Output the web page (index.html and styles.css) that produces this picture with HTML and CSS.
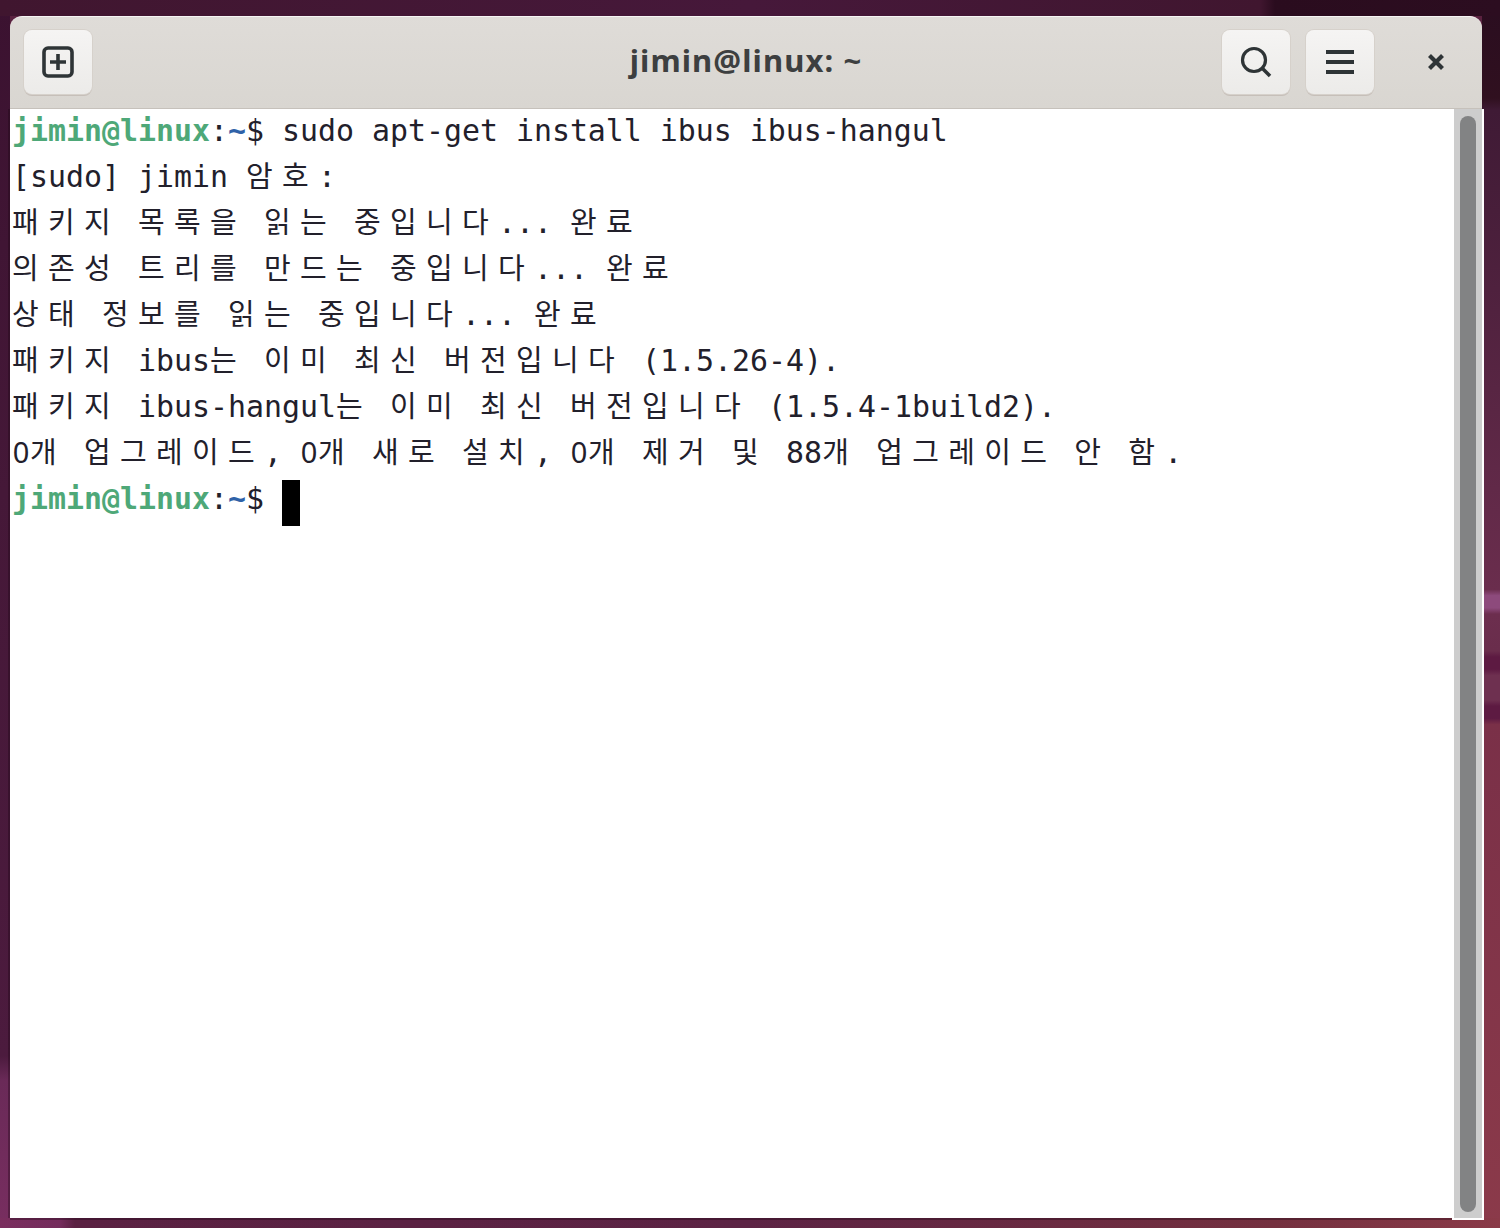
FILE: index.html
```html
<!DOCTYPE html>
<html lang="ko">
<head>
<meta charset="utf-8">
<title>jimin@linux: ~</title>
<link rel="stylesheet" href="styles.css">
</head>
<body>
<div class="window">
  <header class="titlebar">
    <div class="side side-start">
      <button class="btn" aria-label="New tab">
        <svg width="32" height="32" viewBox="0 0 32 32" fill="none" stroke="#2e3436"><rect x="2" y="2" width="28" height="28" rx="4" stroke-width="3.600"/><path d="M16 8v16M8 16h16" stroke-width="3.600"/></svg>
      </button>
    </div>
    <div class="title">jimin@linux: ~</div>
    <div class="side side-end">
      <button class="btn" aria-label="Search">
        <svg width="32" height="32" viewBox="0 0 32 32" fill="none" stroke="#2e3436"><circle cx="14" cy="14" r="11.500" stroke-width="3.200"/><path d="M22.500 22.500l7.500 7.500" stroke-width="3.600"/></svg>
      </button>
      <button class="btn" aria-label="Menu">
        <svg width="28" height="24" viewBox="0 0 28 24" fill="#2e3436"><rect y="0" width="28" height="4"/><rect y="10" width="28" height="4"/><rect y="20" width="28" height="4"/></svg>
      </button>
      <button class="close" aria-label="Close">
        <svg width="18" height="18" viewBox="0 0 18 18" stroke="#2e3436" stroke-width="4.200"><path d="M2.500 2.500l13 13M15.500 2.500l-13 13"/></svg>
      </button>
    </div>
  </header>
  <div class="body">
    <div class="term">
      <div class="line"><b class="g">jimin@linux</b>:<b class="b">~</b>$ sudo apt-get install ibus ibus-hangul</div>
      <div class="line">[sudo] jimin <span class="k">암호</span>:</div>
      <div class="line"><span class="k">패키지</span> <span class="k">목록을</span> <span class="k">읽는</span> <span class="k">중입니다</span>... <span class="k">완료</span></div>
      <div class="line"><span class="k">의존성</span> <span class="k">트리를</span> <span class="k">만드는</span> <span class="k">중입니다</span>... <span class="k">완료</span></div>
      <div class="line"><span class="k">상태</span> <span class="k">정보를</span> <span class="k">읽는</span> <span class="k">중입니다</span>... <span class="k">완료</span></div>
      <div class="line"><span class="k">패키지</span> ibus<span class="k">는</span> <span class="k">이미</span> <span class="k">최신</span> <span class="k">버전입니다</span> (1.5.26-4).</div>
      <div class="line"><span class="k">패키지</span> ibus-hangul<span class="k">는</span> <span class="k">이미</span> <span class="k">최신</span> <span class="k">버전입니다</span> (1.5.4-1build2).</div>
      <div class="line"><span class="z">0</span><span class="k">개</span> <span class="k">업그레이드</span>, <span class="z">0</span><span class="k">개</span> <span class="k">새로</span> <span class="k">설치</span>, <span class="z">0</span><span class="k">개</span> <span class="k">제거</span> <span class="k">및</span> 88<span class="k">개</span> <span class="k">업그레이드</span> <span class="k">안</span> <span class="k">함</span>.</div>
      <div class="line"><b class="g">jimin@linux</b>:<b class="b">~</b>$ <span class="cursor"></span></div>
    </div>
    <div class="scrollbar"><div class="trough"><div class="thumb"></div></div></div>
  </div>
</div>
</body>
</html>
```
FILE: styles.css
```css
* { box-sizing: border-box; }
html, body { margin: 0; }
body {
  height: 1228px;
  overflow: hidden;
  padding: 16px 16px 8px 10px;
  background-color: #5a2240;
  background-repeat: no-repeat;
  background-image:
    linear-gradient(90deg, #40162f 0%, #46183a 50%, #40162f 84%, #2a0c1e 85%, #2c0d20 100%),
    linear-gradient(90deg, #7a2e5e 0%, #742c5c 4%, #5a2142 5%, #5c2344 50%, #74303f 85%, #8a3a48 100%),
    linear-gradient(180deg, #3b1230 0%, #451838 40%, #4c1b3e 86%, #6a2a58 88%, #782e60 100%),
    linear-gradient(180deg, #2a0d20 0%, #30101f 8%, #3f1a35 9%, #6a2d4d 48%, #8d4a7c 48.5%, #8d4a7c 49.500%, #6c2e4e 50%, #6a2d4c 53%, #5d1a42 53.500%, #5d1a42 54.500%, #6e3050 55%, #6e3050 57%, #5d1a42 57.500%, #5d1a42 58.500%, #7a3048 59%, #8b3a4a 100%);
  background-size:
    100% 16px,
    100% 10px,
    10px 100%,
    18px 100%;
  background-position:
    0 0,
    0 100%,
    0 0,
    100% 0;
}
.window {
  width: 1474px;
  height: 1204px;
  display: flex;
  flex-direction: column;
}
.titlebar {
  height: 93px;
  width: 1472px;
  flex: none;
  display: grid;
  grid-template-columns: 1fr auto 1fr;
  align-items: center;
  padding: 0 0 1px;
  border-top: 1px solid #f6f5f4;
  border-bottom: 1px solid #c6c1bb;
  border-radius: 12px 12px 0 0;
  background: linear-gradient(180deg, #dfdcd8, #d9d6d1);
}
.side { display: flex; align-items: center; gap: 16px; }
.side-start { padding-left: 14px; }
.side-end { justify-content: flex-end; }
.title {
  font: bold 31px "Noto Sans", "Open Sans", sans-serif;
  letter-spacing: 1.1px;
  color: #3d3f40;
  padding-bottom: 4px;
}
.btn {
  width: 68px;
  height: 64px;
  padding: 0;
  display: flex;
  align-items: center;
  justify-content: center;
  border: 0;
  border-radius: 8px;
  background: linear-gradient(180deg, #f5f4f3, #ecebe9);
  box-shadow: 0 0 0 1px #d6d1cb, 0 2px 0 #c6bfb9;
}
.close {
  width: 92px;
  height: 64px;
  padding: 0;
  display: flex;
  align-items: center;
  justify-content: center;
  border: 0;
  background: none;
}
.body {
  flex: 1;
  display: flex;
  min-height: 0;
}
.term {
  flex: 1;
  margin-bottom: 2px;
  padding: 0 0 0 2px;
  font-family: "DejaVu Sans Mono", monospace;
  font-size: 29.9px;
  color: #22202b;
  overflow: hidden;
  background: #fff;
  box-shadow: 0 2px 0 rgba(30,5,20,.35), -2px 0 0 rgba(30,5,20,.35);
}
.line { height: 46px; line-height: 44px; white-space: pre; }
.g { color: #4ea878; }
.b { color: #2f62a8; }
.k {
  font-family: "Noto Sans CJK KR", sans-serif;
  font-size: 29px;
  line-height: 0;
  letter-spacing: 9.32px;
}
.z {
  display: inline-block;
  width: 18px;
  font-family: "Noto Sans", sans-serif;
  font-size: 29px;
  line-height: 0;
  text-align: center;
}
.cursor {
  display: inline-block;
  width: 18px;
  height: 46px;
  margin-top: 3px;
  background: #000;
  vertical-align: top;
}
.scrollbar {
  width: 32px;
  flex: none;
  padding: 0 2px 2px;
  background: #fff;
}
.trough {
  height: 100%;
  padding: 7px 6px 6px;
  background: #cdcdcd;
}
.thumb {
  height: 100%;
  border-radius: 8px;
  background: #828384;
}
```
